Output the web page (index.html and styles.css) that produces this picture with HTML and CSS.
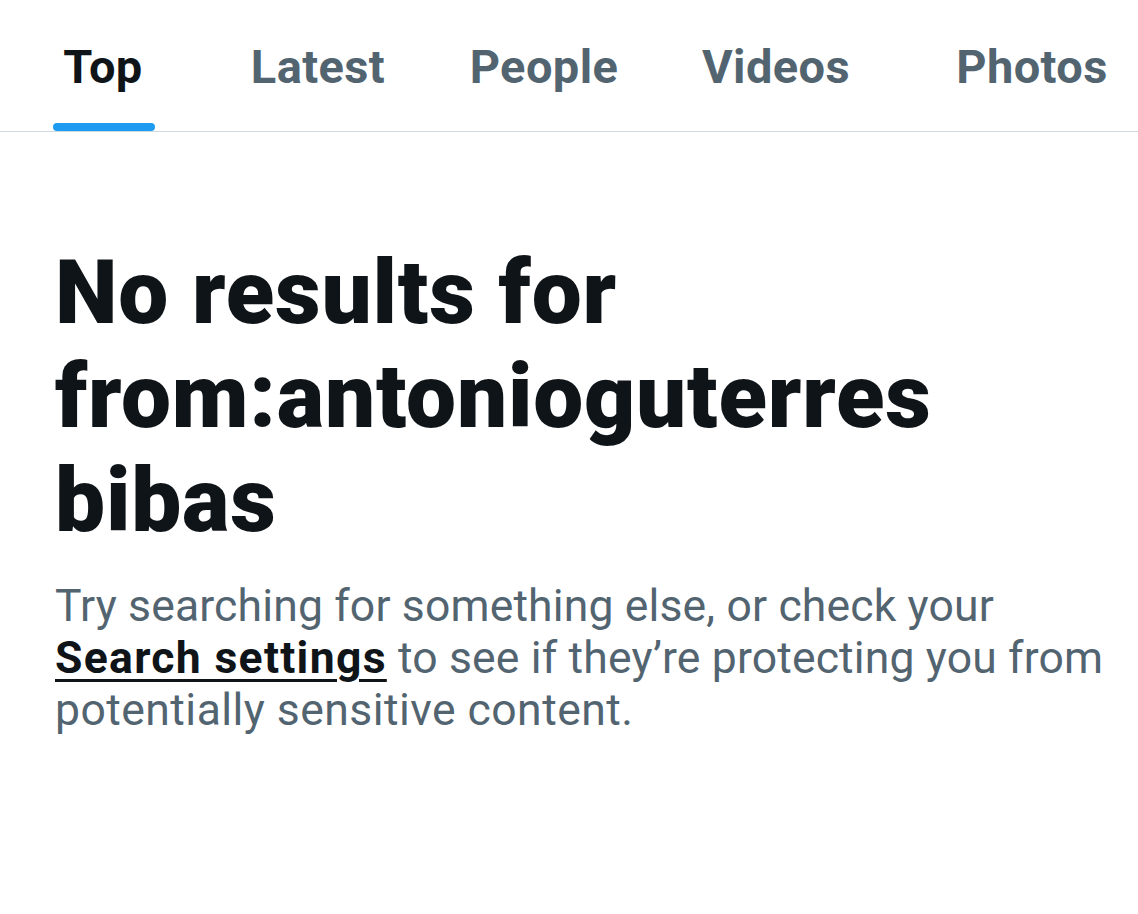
FILE: index.html
```html
<!DOCTYPE html>
<html lang="en">
<head>
<meta charset="utf-8">
<title>Search</title>
<link rel="stylesheet" href="styles.css">
</head>
<body>
<div class="page">
  <nav class="tabs">
    <div class="tab active"><span class="tab-label">Top<span class="indicator"></span></span></div>
    <div class="tab"><span class="tab-label">Latest</span></div>
    <div class="tab"><span class="tab-label">People</span></div>
    <div class="tab"><span class="tab-label">Videos</span></div>
    <div class="tab"><span class="tab-label">Photos</span></div>
  </nav>
  <main class="empty">
    <h1 class="empty-title">No results for<br>from:antonioguterres<br>bibas</h1>
    <p class="empty-text">Try searching for something else, or check your<br><a class="link" href="#">Search settings</a> to see if they’re protecting you from<br><span class="last-line">potentially sensitive content.</span></p>
  </main>
</div>
</body>
</html>
```

FILE: styles.css
```css
html, body {
  margin: 0;
  padding: 0;
  background: #ffffff;
}
body {
  font-family: Roboto, "Liberation Sans", Arial, sans-serif;
  color: #0f1419;
  width: 1138px;
  height: 914px;
  overflow: hidden;
}
.page {
  display: flex;
  flex-direction: column;
}
.tabs {
  display: grid;
  grid-template-columns: 206px 224px 228px 236px 276px;
  border-bottom: 1px solid #cfd9de;
  height: 131px;
  overflow: hidden;
}
.tab {
  display: flex;
  justify-content: center;
  align-items: flex-start;
  padding-top: 40px;
}
.tab-label {
  position: relative;
  font-size: 47px;
  line-height: 54px;
  font-weight: 700;
  color: #536471;
  letter-spacing: 0.4px;
  white-space: nowrap;
}
.tab.active .tab-label {
  color: #0f1419;
}
.indicator {
  position: absolute;
  left: -10px;
  right: -12px;
  top: 83px;
  height: 8px;
  border-radius: 4px;
  background: #1d9bf0;
}
.empty {
  display: flex;
  flex-direction: column;
  padding: 109px 30px 0 55px;
}
.empty-title {
  margin: 0;
  font-size: 89px;
  line-height: 104px;
  font-weight: 900;
  letter-spacing: 0.8px;
  color: #0f1419;
}
.empty-text {
  margin: 27px 0 0 0;
  font-size: 44.5px;
  line-height: 52px;
  font-weight: 400;
  letter-spacing: 0.15px;
  color: #536471;
  white-space: nowrap;
}
.last-line {
  letter-spacing: 0.45px;
}
.link {
  color: #0f1419;
  font-weight: 700;
  letter-spacing: 1.3px;
  text-decoration: underline;
  text-decoration-thickness: 3px;
  text-underline-offset: 6px;
}
```
